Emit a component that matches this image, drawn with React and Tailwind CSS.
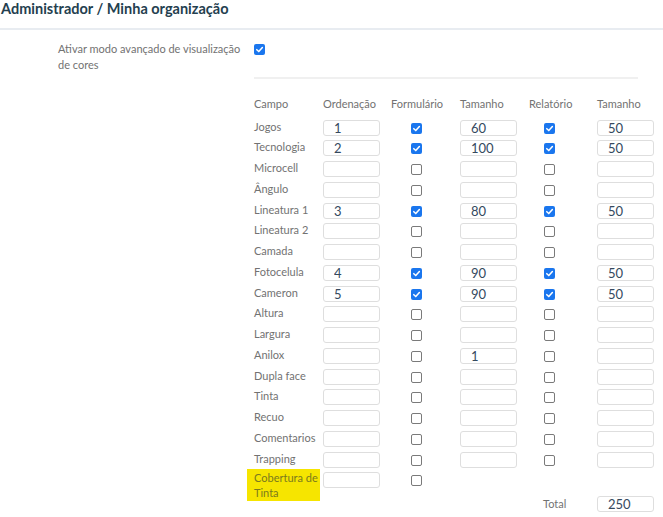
import React from "react";

const rows = [
  { name: "Jogos", ord: "1", form: true, t1: "60", rel: true, t2: "50" },
  { name: "Tecnologia", ord: "2", form: true, t1: "100", rel: true, t2: "50" },
  { name: "Microcell" },
  { name: "Ângulo" },
  { name: "Lineatura 1", ord: "3", form: true, t1: "80", rel: true, t2: "50" },
  { name: "Lineatura 2" },
  { name: "Camada" },
  { name: "Fotocelula", ord: "4", form: true, t1: "90", rel: true, t2: "50" },
  { name: "Cameron", ord: "5", form: true, t1: "90", rel: true, t2: "50" },
  { name: "Altura" },
  { name: "Largura" },
  { name: "Anilox", t1: "1" },
  { name: "Dupla face" },
  { name: "Tinta" },
  { name: "Recuo" },
  { name: "Comentarios" },
  { name: "Trapping" },
];

function Check({ checked }) {
  if (checked) {
    return (
      <span className="flex h-[11px] w-[11px] items-center justify-center rounded-[2px] bg-[#1a76ee]">
        <svg width="9" height="9" viewBox="0 0 10 10" fill="none">
          <path d="M2 5.2 L4.2 7.3 L8.2 2.8" stroke="white" strokeWidth="1.7" strokeLinecap="round" strokeLinejoin="round" />
        </svg>
      </span>
    );
  }
  return <span className="block h-[11px] w-[11px] rounded-[2px] border border-[#7a7a7a] bg-white" />;
}

function Field({ value }) {
  return (
    <input
      readOnly
      value={value || ""}
      className="block h-[16px] w-[57px] rounded-[3px] border border-[#dedede] bg-white pl-[10px] text-[13px] leading-[14px] text-[#34495e] outline-none"
    />
  );
}

const grid = "grid grid-cols-[69px_68px_69px_69px_68px_66px]";

function Row({ r }) {
  return (
    <div className={`${grid} h-[20.75px] items-start`}>
      <div className="-mt-[1px] text-[11px] leading-[16px] text-[#727272] whitespace-nowrap">{r.name}</div>
      <Field value={r.ord} />
      <div className="pl-[20px] pt-[3px]"><Check checked={r.form} /></div>
      <Field value={r.t1} />
      <div className="pl-[15px] pt-[3px]"><Check checked={r.rel} /></div>
      <Field value={r.t2} />
    </div>
  );
}

export default function App() {
  return (
    <div className="relative h-[517px] w-[663px] overflow-hidden bg-white font-['Lato',sans-serif]">
      <div className="h-[30px] border-b-2 border-[#e8ecf1] pl-[1px] pt-[1px]">
        <h1 className="text-[14.5px] font-bold leading-[16px] text-[#24404f]">Administrador / Minha organização</h1>
      </div>
      <div className="flex pt-[11px]">
        <div className="ml-[58px] w-[196px] text-[11px] leading-[16px] text-[#727272]">
          Ativar modo avançado de visualização de cores
        </div>
        <div className="pt-[3px]"><Check checked /></div>
      </div>
      <div className="ml-[254px] mt-[4px] h-[2px] w-[384px] bg-[#f0f0f0]" />
      <div className="ml-[254px] mt-[17px]">
        <div className={`${grid} h-[23.5px] text-[11px] leading-[16px] text-[#727272]`}>
          <div>Campo</div>
          <div>Ordenação</div>
          <div>Formulário</div>
          <div>Tamanho</div>
          <div>Relatório</div>
          <div>Tamanho</div>
        </div>
        {rows.map((r) => (
          <Row key={r.name} r={r} />
        ))}
        <div className={`${grid} h-[24px] items-start`}>
          <div className="-ml-[7px] -mt-[3px] w-[73px] bg-[#f6e500] py-[1px] pl-[7px] text-[11px] leading-[15px] text-[#7a7a1e]">
            Cobertura de Tinta
          </div>
          <Field />
          <div className="pl-[20px] pt-[3px]"><Check /></div>
          <div />
          <div />
          <div />
        </div>
        <div className={`${grid} h-[20px] items-start`}>
          <div />
          <div />
          <div />
          <div />
          <div className="pl-[14px] text-[11px] leading-[16px] text-[#727272]">Total</div>
          <Field value="250" />
        </div>
      </div>
    </div>
  );
}
